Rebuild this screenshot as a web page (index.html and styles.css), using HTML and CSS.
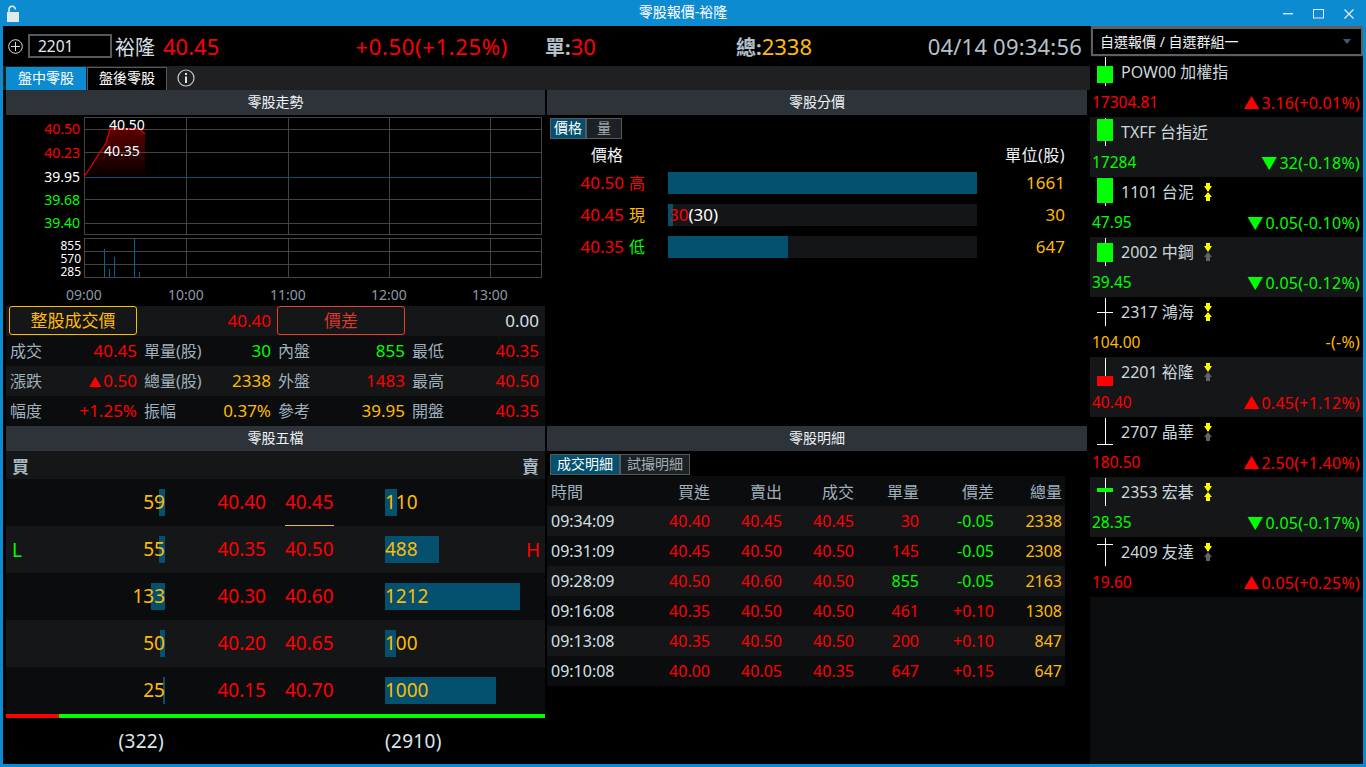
FILE: index.html
```html
<!DOCTYPE html>
<html lang="zh-Hant">
<head>
    <meta charset="UTF-8">
    <title>零股報價-裕隆</title>
    <link rel="stylesheet" href="styles.css">
</head>
<body>
    <svg class="defs" width="0" height="0">
        <symbol id="arrow-down" viewBox="0 0 8 9"><polygon points="2,0 6,0 6,3 8,3 4,9 0,3 2,3"/></symbol>
        <symbol id="arrow-up" viewBox="0 0 8 9"><polygon points="4,0 8,5 6,5 6,9 2,9 2,5 0,5"/></symbol>
    </svg>

    <div class="window">
        <div class="titlebar">
            <svg class="lock" width="12" height="17" viewBox="0 0 12 17">
                <path d="M2 8V4.5a3.2 3.2 0 0 1 6.4 0" fill="none" stroke="#e3e8ec" stroke-width="1.6"/>
                <rect x="0" y="7" width="12" height="10" fill="#e3e8ec"/>
            </svg>
            <span class="title">零股報價-裕隆</span>
            <div class="win-btns">
                <svg width="10" height="10" viewBox="0 0 10 10"><rect x="0" y="4" width="10" height="1.4" fill="#e6edf2"/></svg>
                <svg width="11" height="10" viewBox="0 0 11 10"><rect x=".5" y=".5" width="10" height="8.5" fill="none" stroke="#e6edf2"/></svg>
                <svg width="10" height="10" viewBox="0 0 10 10"><path d="M.5 .5L9.5 9.5M9.5 .5L.5 9.5" stroke="#e6edf2" stroke-width="1.2"/></svg>
            </div>
        </div>

        <div class="client">
            <div class="workspace">
                <div class="quote-head">
                    <svg class="plus" width="15" height="15" viewBox="0 0 15 15">
                        <circle cx="7.5" cy="7.5" r="6.8" fill="none" stroke="#d8dde0"/>
                        <path d="M3 7.5H12M7.5 3V12" stroke="#d8dde0"/>
                    </svg>
                    <div class="code-box">2201</div>
                    <span class="head-name">裕隆</span>
                    <span class="head-price red">40.45</span>
                    <span class="head-change red">+0.50(+1.25%)</span>
                    <span class="head-single"><span class="head-label">單:</span><span class="red">30</span></span>
                    <span class="head-total"><span class="head-label">總:</span><span class="orange">2338</span></span>
                    <span class="head-time">04/14 09:34:56</span>
                </div>

                <div class="tabs">
                    <div class="tab tab-on">盤中零股</div>
                    <div class="tab">盤後零股</div>
                    <svg class="info" width="18" height="18" viewBox="0 0 18 18">
                        <circle cx="9" cy="9" r="8" fill="none" stroke="#c8cdd0" stroke-width="1.2"/>
                        <rect x="8" y="7.5" width="2" height="6.5" fill="#e0e4e6"/>
                        <rect x="8" y="4" width="2" height="2" fill="#e0e4e6"/>
                    </svg>
                </div>

                <div class="panels">
                    <section class="panel">
                        <div class="panel-title">零股走勢</div>
                        <svg class="chart" width="539" height="190" viewBox="6 115 539 190">
                            <defs>
                                <linearGradient id="area" x1="0" y1="0" x2="0" y2="1">
                                    <stop offset="0" stop-color="#5c0000"/>
                                    <stop offset="1" stop-color="#080000"/>
                                </linearGradient>
                            </defs>
                            <path d="M84 177L106 143L110 129H140L145 134V177Z" fill="url(#area)"/>
                            <g class="grid-lines">
                                <rect x="84.5" y="117.5" width="457" height="117"/>
                                <path d="M84 129.5H541M84 152.5H541M84 199.5H541M84 223.5H541"/>
                                <path d="M186.5 117V234M288.5 117V234M389.5 117V234M490.5 117V234"/>
                                <rect x="84.5" y="238.5" width="457" height="39"/>
                                <path d="M84 251.5H541M84 264.5H541"/>
                                <path d="M186.5 238V277M288.5 238V277M389.5 238V277M490.5 238V277"/>
                            </g>
                            <path d="M84 177.5H541" stroke="#05506f" fill="none"/>
                            <path d="M84 177L106 143L110 129H140L145 134" stroke="#d00" stroke-width="1.3" fill="none"/>
                            <path class="vol" d="M104.5 249V277M109.5 269V277M114.5 257V277M134.5 238V277M139.5 272V277"/>

                            <g class="axis">
                                <text x="80" y="134" class="red">40.50</text>
                                <text x="80" y="158" class="red">40.23</text>
                                <text x="80" y="182" fill="#fff">39.95</text>
                                <text x="80" y="205" class="green">39.68</text>
                                <text x="80" y="228" class="green">39.40</text>
                            </g>
                            <g class="axis vol-axis">
                                <text x="81" y="250">855</text>
                                <text x="81" y="263">570</text>
                                <text x="81" y="276">285</text>
                            </g>
                            <g class="axis-time">
                                <text x="84" y="300">09:00</text>
                                <text x="186" y="300">10:00</text>
                                <text x="288" y="300">11:00</text>
                                <text x="389" y="300">12:00</text>
                                <text x="490" y="300">13:00</text>
                            </g>
                            <text x="109" y="130" class="chart-tag">40.50</text>
                            <text x="104" y="156" class="chart-tag">40.35</text>
                        </svg>
                        <div class="stats">
                            <div class="stat-row">
                                <div class="stat"><div class="ref-btn ref-orange">整股成交價</div></div>
                                <div class="stat"><b></b><span class="red">40.40</span></div>
                                <div class="stat"><div class="ref-btn ref-red">價差</div></div>
                                <div class="stat"><b></b><span class="pale">0.00</span></div>
                            </div>
                            <div class="stat-row">
                                <div class="stat"><b>成交</b><span class="red">40.45</span></div>
                                <div class="stat"><b>單量(股)</b><span class="green">30</span></div>
                                <div class="stat"><b>內盤</b><span class="green">855</span></div>
                                <div class="stat"><b>最低</b><span class="red">40.35</span></div>
                            </div>
                            <div class="stat-row">
                                <div class="stat"><b>漲跌</b><span class="red"><span class="tri">▲</span>0.50</span></div>
                                <div class="stat"><b>總量(股)</b><span class="orange">2338</span></div>
                                <div class="stat"><b>外盤</b><span class="red">1483</span></div>
                                <div class="stat"><b>最高</b><span class="red">40.50</span></div>
                            </div>
                            <div class="stat-row">
                                <div class="stat"><b>幅度</b><span class="red">+1.25%</span></div>
                                <div class="stat"><b>振幅</b><span class="orange">0.37%</span></div>
                                <div class="stat"><b>參考</b><span class="orange">39.95</span></div>
                                <div class="stat"><b>開盤</b><span class="red">40.35</span></div>
                            </div>
                        </div>
                    </section>

                    <section class="panel">
                        <div class="panel-title">零股分價</div>
                        <div class="switch">
                            <div class="switch-btn switch-on">價格</div>
                            <div class="switch-btn">量</div>
                        </div>
                        <div class="dist-head">
                            <span>價格</span>
                            <span class="dist-unit">單位(股)</span>
                        </div>
                        <div class="dist-row">
                            <span class="dist-price red">40.50</span>
                            <span class="dist-flag red">高</span>
                            <div class="dist-track"><div class="dist-bar" style="width:309px"></div></div>
                            <span class="dist-vol orange">1661</span>
                        </div>
                        <div class="dist-row">
                            <span class="dist-price red">40.45</span>
                            <span class="dist-flag orange">現</span>
                            <div class="dist-track">
                                <div class="dist-bar" style="width:5px"></div>
                                <span class="dist-note"><span class="red">30</span>(30)</span>
                            </div>
                            <span class="dist-vol orange">30</span>
                        </div>
                        <div class="dist-row">
                            <span class="dist-price red">40.35</span>
                            <span class="dist-flag green">低</span>
                            <div class="dist-track"><div class="dist-bar" style="width:120px"></div></div>
                            <span class="dist-vol orange">647</span>
                        </div>
                    </section>

                    <section class="panel">
                        <div class="panel-title">零股五檔</div>
                        <div class="book-head"><span>買</span><span>賣</span></div>
                        <div class="book-row">
                            <div class="book-buy"><div class="qty"><i style="width:6px"></i><span>59</span></div></div>
                            <div class="book-bid">40.40</div>
                            <div class="book-ask"><span class="now">40.45</span></div>
                            <div class="book-sell"><div class="qty"><i style="width:12px"></i><span>110</span></div></div>
                        </div>
                        <div class="book-row">
                            <div class="book-buy"><em class="green">L</em><div class="qty"><i style="width:6px"></i><span>55</span></div></div>
                            <div class="book-bid">40.35</div>
                            <div class="book-ask"><span>40.50</span></div>
                            <div class="book-sell"><div class="qty"><i style="width:54px"></i><span>488</span></div><em class="red">H</em></div>
                        </div>
                        <div class="book-row">
                            <div class="book-buy"><div class="qty"><i style="width:14px"></i><span>133</span></div></div>
                            <div class="book-bid">40.30</div>
                            <div class="book-ask"><span>40.60</span></div>
                            <div class="book-sell"><div class="qty"><i style="width:135px"></i><span>1212</span></div></div>
                        </div>
                        <div class="book-row">
                            <div class="book-buy"><div class="qty"><i style="width:5px"></i><span>50</span></div></div>
                            <div class="book-bid">40.20</div>
                            <div class="book-ask"><span>40.65</span></div>
                            <div class="book-sell"><div class="qty"><i style="width:11px"></i><span>100</span></div></div>
                        </div>
                        <div class="book-row">
                            <div class="book-buy"><div class="qty"><i style="width:2px"></i><span>25</span></div></div>
                            <div class="book-bid">40.15</div>
                            <div class="book-ask"><span>40.70</span></div>
                            <div class="book-sell"><div class="qty"><i style="width:111px"></i><span>1000</span></div></div>
                        </div>
                        <div class="ratio"><div class="ratio-buy" style="width:53px"></div></div>
                        <div class="book-total">
                            <span class="total-buy">(322)</span>
                            <span class="total-sell">(2910)</span>
                        </div>
                    </section>

                    <section class="panel">
                        <div class="panel-title">零股明細</div>
                        <div class="switch switch-wide">
                            <div class="switch-btn switch-on">成交明細</div>
                            <div class="switch-btn">試撮明細</div>
                        </div>
                        <div class="ticks">
                            <div class="tick tick-head"><span>時間</span><span>買進</span><span>賣出</span><span>成交</span><span>單量</span><span>價差</span><span>總量</span></div>
                            <div class="tick"><span>09:34:09</span><span class="red">40.40</span><span class="red">40.45</span><span class="red">40.45</span><span class="red">30</span><span class="green">-0.05</span><span class="orange">2338</span></div>
                            <div class="tick"><span>09:31:09</span><span class="red">40.45</span><span class="red">40.50</span><span class="red">40.50</span><span class="red">145</span><span class="green">-0.05</span><span class="orange">2308</span></div>
                            <div class="tick"><span>09:28:09</span><span class="red">40.50</span><span class="red">40.60</span><span class="red">40.50</span><span class="green">855</span><span class="green">-0.05</span><span class="orange">2163</span></div>
                            <div class="tick"><span>09:16:08</span><span class="red">40.35</span><span class="red">40.50</span><span class="red">40.50</span><span class="red">461</span><span class="red">+0.10</span><span class="orange">1308</span></div>
                            <div class="tick"><span>09:13:08</span><span class="red">40.35</span><span class="red">40.50</span><span class="red">40.50</span><span class="red">200</span><span class="red">+0.10</span><span class="orange">847</span></div>
                            <div class="tick"><span>09:10:08</span><span class="red">40.00</span><span class="red">40.05</span><span class="red">40.35</span><span class="red">647</span><span class="red">+0.15</span><span class="orange">647</span></div>
                        </div>
                    </section>
                </div>
            </div>

            <aside class="watchlist">
                <div class="watch-select">
                    <span>自選報價 / 自選群組一</span>
                    <i class="caret"></i>
                </div>

                <div class="watch-row">
                    <div class="watch-top">
                        <svg class="candle" width="16" height="30"><rect x="8" y="0" width="1" height="29" fill="#fff"/><rect x="0" y="9" width="16" height="17" fill="#0f0"/></svg>
                        <span class="watch-name">POW00 加權指</span>
                    </div>
                    <div class="watch-bottom red"><span>17304.81</span><span><span class="tri">▲</span>3.16(+0.01%)</span></div>
                </div>
                <div class="watch-row">
                    <div class="watch-top">
                        <svg class="candle" width="16" height="30"><rect x="8" y="1" width="1" height="28" fill="#fff"/><rect x="0" y="2" width="16" height="22" fill="#0f0"/></svg>
                        <span class="watch-name">TXFF 台指近</span>
                    </div>
                    <div class="watch-bottom green"><span>17284</span><span><span class="tri">▼</span>32(-0.18%)</span></div>
                </div>
                <div class="watch-row">
                    <div class="watch-top">
                        <svg class="candle" width="16" height="30"><rect x="8" y="1" width="1" height="28" fill="#fff"/><rect x="0" y="1" width="16" height="25" fill="#0f0"/></svg>
                        <span class="watch-name">1101 台泥</span>
                        <div class="flags"><svg class="flag-on"><use href="#arrow-down"/></svg><svg class="flag-on"><use href="#arrow-up"/></svg></div>
                    </div>
                    <div class="watch-bottom green"><span>47.95</span><span><span class="tri">▼</span>0.05(-0.10%)</span></div>
                </div>
                <div class="watch-row">
                    <div class="watch-top">
                        <svg class="candle" width="16" height="30"><rect x="8" y="1" width="1" height="28" fill="#fff"/><rect x="0" y="6" width="16" height="19" fill="#0f0"/></svg>
                        <span class="watch-name">2002 中鋼</span>
                        <div class="flags"><svg class="flag-on"><use href="#arrow-down"/></svg><svg class="flag-off"><use href="#arrow-up"/></svg></div>
                    </div>
                    <div class="watch-bottom green"><span>39.45</span><span><span class="tri">▼</span>0.05(-0.12%)</span></div>
                </div>
                <div class="watch-row">
                    <div class="watch-top">
                        <svg class="candle" width="16" height="30"><rect x="8" y="1" width="1" height="28" fill="#fff"/><rect x="0" y="15" width="16" height="1" fill="#fff"/></svg>
                        <span class="watch-name">2317 鴻海</span>
                        <div class="flags"><svg class="flag-on"><use href="#arrow-down"/></svg><svg class="flag-on"><use href="#arrow-up"/></svg></div>
                    </div>
                    <div class="watch-bottom orange"><span>104.00</span><span>-(-%)</span></div>
                </div>
                <div class="watch-row">
                    <div class="watch-top">
                        <svg class="candle" width="16" height="30"><rect x="8" y="1" width="1" height="28" fill="#fff"/><rect x="0" y="19" width="16" height="10" fill="#f00"/></svg>
                        <span class="watch-name">2201 裕隆</span>
                        <div class="flags"><svg class="flag-on"><use href="#arrow-down"/></svg><svg class="flag-off"><use href="#arrow-up"/></svg></div>
                    </div>
                    <div class="watch-bottom red"><span>40.40</span><span><span class="tri">▲</span>0.45(+1.12%)</span></div>
                </div>
                <div class="watch-row">
                    <div class="watch-top">
                        <svg class="candle" width="16" height="30"><rect x="8" y="1" width="1" height="27" fill="#fff"/><rect x="0" y="27" width="16" height="1" fill="#fff"/></svg>
                        <span class="watch-name">2707 晶華</span>
                        <div class="flags"><svg class="flag-on"><use href="#arrow-down"/></svg><svg class="flag-off"><use href="#arrow-up"/></svg></div>
                    </div>
                    <div class="watch-bottom red"><span>180.50</span><span><span class="tri">▲</span>2.50(+1.40%)</span></div>
                </div>
                <div class="watch-row">
                    <div class="watch-top">
                        <svg class="candle" width="16" height="30"><rect x="8" y="1" width="1" height="28" fill="#fff"/><rect x="0" y="11" width="16" height="4" fill="#0f0"/></svg>
                        <span class="watch-name">2353 宏碁</span>
                        <div class="flags"><svg class="flag-on"><use href="#arrow-down"/></svg><svg class="flag-on"><use href="#arrow-up"/></svg></div>
                    </div>
                    <div class="watch-bottom green"><span>28.35</span><span><span class="tri">▼</span>0.05(-0.17%)</span></div>
                </div>
                <div class="watch-row">
                    <div class="watch-top">
                        <svg class="candle" width="16" height="30"><rect x="8" y="1" width="1" height="28" fill="#fff"/><rect x="0" y="7" width="16" height="1" fill="#fff"/></svg>
                        <span class="watch-name">2409 友達</span>
                        <div class="flags"><svg class="flag-on"><use href="#arrow-down"/></svg><svg class="flag-off"><use href="#arrow-up"/></svg></div>
                    </div>
                    <div class="watch-bottom red"><span>19.60</span><span><span class="tri">▲</span>0.05(+0.25%)</span></div>
                </div>
            </aside>
        </div>
    </div>
</body>
</html>
```

FILE: styles.css
```css
* { box-sizing: border-box; }
body {
    margin: 0;
    background: #000;
    color: #fff;
    font-family: "Noto Sans", "Noto Sans CJK TC", sans-serif;
    overflow: hidden;
}
.defs { position: absolute; }
.red { color: #f00; fill: #f00; }
.green { color: #0f0; fill: #0f0; }
.orange { color: #fb0; fill: #fb0; }
.pale { color: #d5e0e8; }
.tri { font-size: .75em; margin-right: 2px; }

.window {
    width: 1366px;
    height: 767px;
    display: flex;
    flex-direction: column;
    background: #0d8bd1;
}
.titlebar {
    height: 26px;
    flex: none;
    display: flex;
    align-items: center;
    justify-content: center;
    position: relative;
    padding-bottom: 5px;
    font-size: 14px;
}
.lock { position: absolute; left: 7px; top: 5px; }
.win-btns {
    position: absolute;
    right: 12px;
    top: 9px;
    display: flex;
    gap: 20px;
}
.client {
    flex: 1;
    min-height: 0;
    display: flex;
    margin: 0 3px 3px;
    background: #000;
}

/* left work area */
.workspace { width: 1087px; flex: none; }
.quote-head {
    height: 40px;
    display: flex;
    align-items: center;
    padding-left: 5px;
    font-size: 22px;
    white-space: nowrap;
}
.plus { flex: none; }
.code-box {
    width: 84px;
    height: 24px;
    margin-left: 5px;
    padding-left: 8px;
    border: 2px solid #555a5e;
    font-size: 15.5px;
    line-height: 20px;
    color: #e4eaee;
}
.head-name { width: 48px; margin-left: 3px; font-size: 20px; color: #d5dde2; }
.head-price { width: 55px; }
.head-change { width: 290px; text-align: right; letter-spacing: .65px; }
.head-single { width: 191px; margin-left: 37px; }
.head-total { width: 170px; }
.head-label { font-size: 20px; color: #b5c1ca; font-weight: 700; }
.head-time {
    margin-left: auto;
    margin-right: 8px;
    color: #b5c1ca;
    letter-spacing: .2px;
}

.tabs {
    height: 24px;
    display: flex;
    align-items: center;
    padding-left: 3px;
    background: #1e2022;
}
.tab {
    width: 80px;
    height: 23px;
    margin-right: 1px;
    align-self: flex-end;
    border: 1px solid #555a5e;
    border-bottom: 0;
    background: #000;
    font-size: 14px;
    line-height: 20px;
    text-align: center;
}
.tab-on { background: #0d8bd1; border-color: #0d8bd1; }
.info { margin-left: 9px; }

.panels {
    display: grid;
    grid-template-columns: 539px 540px;
    grid-template-rows: 336px 338px;
    column-gap: 2px;
    margin-left: 3px;
}
.panel { min-width: 0; }
.panel-title {
    height: 25px;
    background: #2d3338;
    font-size: 14px;
    line-height: 23px;
    text-align: center;
    color: #eef2f4;
}

/* trend chart */
.chart { display: block; }
.grid-lines rect, .grid-lines path { fill: none; stroke: #444; }
.vol { stroke: #05608a; fill: none; }
.axis text { font-size: 14px; text-anchor: end; }
.vol-axis text { font-size: 12px; fill: #fff; }
.axis-time text { font-size: 14px; fill: #8b99a5; text-anchor: middle; }
.chart-tag { font-size: 14px; fill: #fff; }

.stats { margin-top: 1px; }
.stat-row {
    height: 30px;
    display: grid;
    grid-template-columns: repeat(4, 134px);
    background: #0a0c0e;
}
.stat-row:nth-child(odd) { background: #141617; }
.stat {
    display: flex;
    align-items: center;
    justify-content: space-between;
    padding: 0 3px 2px 4px;
    font-size: 17px;
    white-space: nowrap;
}
.stat b { font-weight: 400; font-size: 16px; color: #9fb0bc; }
.ref-btn {
    width: 128px;
    height: 29px;
    margin-left: -1px;
    border: 1px solid;
    border-radius: 3px;
    font-size: 17px;
    line-height: 27px;
    text-align: center;
}
.ref-orange { border-color: #fb0; color: #fb0; }
.ref-red { border-color: #e8402f; color: #d8392a; }

/* switch buttons */
.switch {
    display: grid;
    grid-template-columns: 36px 36px;
    width: 72px;
    height: 21px;
    margin: 3px 0 0 3px;
}
.switch-wide { grid-template-columns: 70px 70px; width: 140px; }
.switch-btn {
    border: 1px solid #555a5e;
    background: #1c2125;
    color: #a5adb3;
    font-size: 14px;
    line-height: 17px;
    text-align: center;
}
.switch-on { background: #03506f; color: #fff; }

/* price distribution */
.dist-head {
    display: flex;
    justify-content: space-between;
    width: 518px;
    padding-left: 44px;
    margin-top: 5px;
    height: 28px;
    font-size: 16px;
    line-height: 22px;
    color: #eef2f4;
}
.dist-unit { letter-spacing: .5px; }
.dist-row {
    display: flex;
    align-items: center;
    height: 22px;
    margin-bottom: 10px;
    font-size: 17px;
}
.dist-price { width: 77px; text-align: right; padding-bottom: 2px; }
.dist-flag { width: 16px; margin-left: 5px; font-size: 16px; padding-bottom: 2px; }
.dist-track {
    width: 309px;
    height: 22px;
    margin-left: 23px;
    position: relative;
    background: #141516;
}
.dist-bar { height: 100%; background: #03506f; }
.dist-note {
    position: absolute;
    left: 1px;
    top: 0;
    font-size: 17px;
    line-height: 21px;
}
.dist-vol { width: 88px; text-align: right; padding-bottom: 2px; }

/* five levels */
.book-head {
    height: 28px;
    display: flex;
    justify-content: space-between;
    align-items: center;
    padding: 0 6px;
    background: #141617;
    font-size: 17px;
    font-weight: 700;
    color: #a9b8c3;
}
.book-row {
    height: 47px;
    display: grid;
    grid-template-columns: 159px 101px 119px 160px;
    align-items: center;
    background: #0a0c0e;
    font-size: 19px;
    color: #f00;
}
.book-row:nth-child(even) { background: #141617; }
.book-bid { text-align: right; padding-bottom: 2px; }
.book-ask { padding: 0 0 2px 19px; }
.now { display: inline-block; position: relative; }
.now::after {
    content: "";
    position: absolute;
    left: 0;
    right: 0;
    bottom: -11px;
    height: 1px;
    background: #f0b840;
}
.book-buy, .book-sell {
    display: flex;
    align-items: center;
    justify-content: space-between;
}
.book-buy em, .book-sell em { font-style: normal; font-size: 19px; }
.book-buy em { margin-left: 6px; }
.book-sell em { margin-right: 5px; }
.book-buy .qty { margin-left: auto; text-align: right; }
.qty {
    position: relative;
    height: 27px;
    line-height: 27px;
    color: #fb0;
}
.qty i { position: absolute; top: 0; height: 27px; background: #03506f; }
.book-buy .qty i { right: 0; }
.book-sell .qty i { left: 0; }
.qty span { position: relative; }
.ratio { height: 4px; background: #0f0; }
.ratio-buy { height: 100%; background: #f00; }
.book-total {
    display: grid;
    grid-template-columns: 158px 221px 160px;
    height: 46px;
    align-items: center;
    font-size: 19px;
    letter-spacing: .3px;
    color: #dde6ec;
}
.total-buy { text-align: right; }
.total-sell { grid-column: 3; }

/* tick list */
.ticks { width: 518px; margin-top: 1px; }
.tick {
    height: 30px;
    display: grid;
    grid-template-columns: 99px 60px 72px 72px 65px 75px 68px;
    align-items: center;
    padding: 0 3px 0 4px;
    background: #0a0c0e;
    font-size: 16px;
    text-align: right;
}
.tick:nth-child(even) { background: #141617; }
.tick span:first-child { text-align: left; color: #d5e0e8; }
.tick-head { color: #9fb0bc; }
.tick-head span:first-child { color: #9fb0bc; }

/* watch list */
.watchlist { flex: 1; min-width: 0; background: #0b0d0f; }
.watch-select {
    height: 30px;
    margin-left: 1px;
    display: flex;
    align-items: center;
    justify-content: space-between;
    padding: 0 10px 1px 7px;
    border: 2px solid #5a6066;
    border-top-width: 3px;
    background: #000;
    font-size: 14px;
    color: #eef2f4;
}
.caret {
    border: 4px solid transparent;
    border-top: 5px solid #3c5a72;
    border-bottom: 0;
}
.watch-row {
    height: 60px;
    background: #000;
}
.watch-select + .watch-row { margin-top: 1px; }
.watch-row:nth-child(odd) { background: #141617; }
.watch-top {
    height: 30px;
    display: flex;
    align-items: center;
    padding-left: 7px;
}
.candle { flex: none; }
.watch-name {
    min-width: 83px;
    margin-left: 8px;
    padding-bottom: 3px;
    font-size: 16px;
    color: #cbd6dd;
    white-space: nowrap;
}
.flags {
    width: 8px;
    height: 18px;
    display: flex;
    flex-direction: column;
}
.flags svg { width: 8px; height: 9px; }
.flag-on { fill: #ff0; }
.flag-off { fill: #606468; }
.watch-bottom {
    height: 30px;
    display: flex;
    align-items: center;
    justify-content: space-between;
    padding: 0 3px 0 2px;
    font-size: 15.5px;
}
.watch-bottom span:last-child { font-size: 16px; letter-spacing: .25px; }
.watch-bottom .tri { font-size: 12px; letter-spacing: 0; }
```
